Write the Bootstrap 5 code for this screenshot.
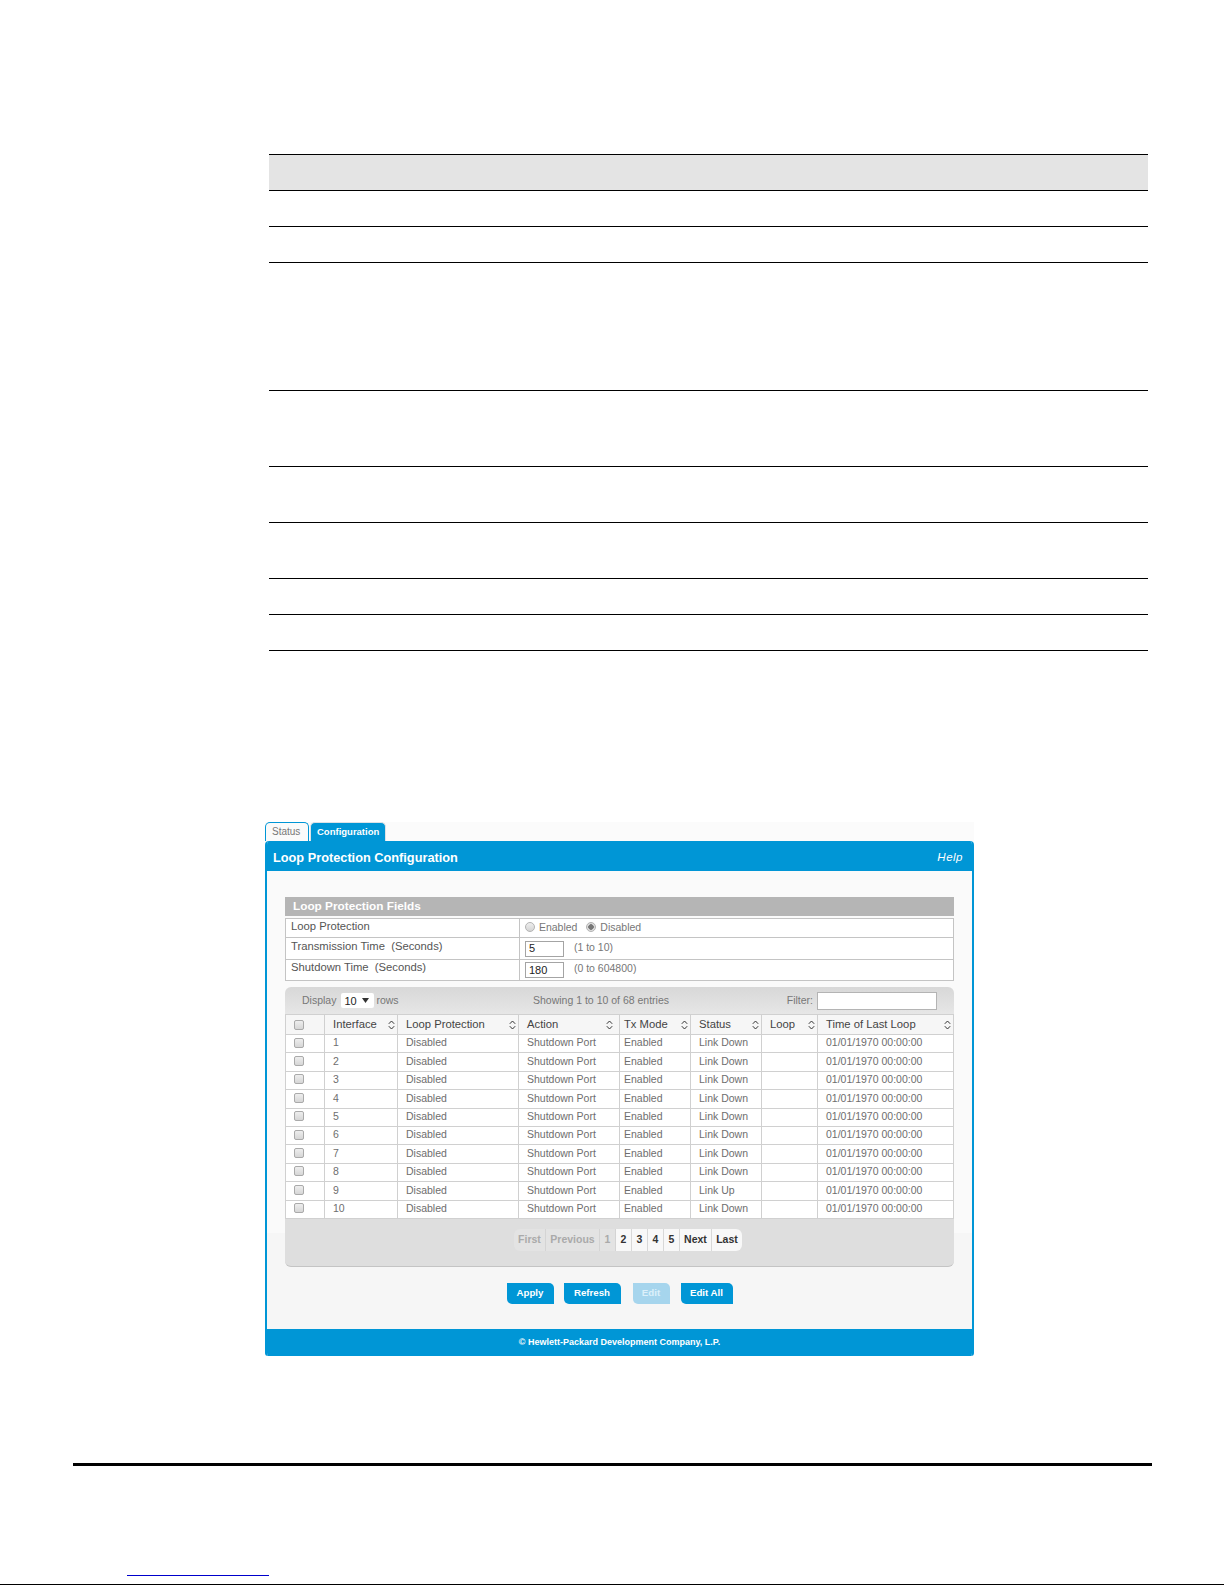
<!DOCTYPE html>
<html lang="en">
<head>
  <meta charset="UTF-8">
  <title>Loop Protection Configuration</title>
  <link href="https://cdn.jsdelivr.net/npm/bootstrap@5.3.3/dist/css/bootstrap.min.css" rel="stylesheet">
  <style>
    html, body { height: 1585px; overflow: hidden; }
    body { background: #fff; font-family: "Liberation Sans", Arial, sans-serif; font-size: 10.5px; color: #666; }

    /* blank document table above the figure */
    .doc-area { padding: 154px 77px 0 269px; }
    .doc-row { border-top: 1px solid #000; height: 36px; }
    .doc-row.head { background: #e4e4e4; }
    .doc-row.h128 { height: 128px; }
    .doc-row.h76 { height: 76px; }
    .doc-row.h56 { height: 56px; }
    .doc-row.end { height: 1px; }

    /* figure */
    .shot { width: 709px; margin: 171px 0 0 265px; background: #fbfbfb; }
    .shot-tabs { height: 19px; border: 0; gap: 1px; }
    .shot-tabs .nav-link { width: 44px; height: 19px; padding: 3px 0 0 6px; border: 1px solid #0096d6; border-bottom: 0; border-radius: 5px 5px 0 0; font-size: 10px; line-height: 12px; color: #777; background: #fafafa; }
    .shot-tabs .nav-link.active { width: 76px; background: #0096d6; color: #fff; font-weight: 700; font-size: 9.5px; }
    .shot-panel { border: solid #0096d6; border-width: 0 2px 0 2px; background: linear-gradient(#fafafa 392px, #f6f6f6 392px); border-radius: 4px 4px 3px 3px; overflow: hidden; }
    .shot-head { height: 30px; margin: 0 -2px; padding: 3px 11px 0 8px; background: #0096d6; color: #fff; }
    .shot-title { font-size: 12.75px; font-weight: 700; }
    .shot-help { font-size: 11.5px; font-style: italic; letter-spacing: .5px; color: #fff; text-decoration: none; }
    .shot-body { padding: 26px 18px 0; }
    .fields-bar { height: 19px; padding: 0 8px; background: #b5b5b5; color: #fff; font-size: 11.8px; font-weight: 700; line-height: 19px; margin-bottom: 2px; }
    .fields-table { width: 669px; margin: 0; table-layout: fixed; border-collapse: collapse; --bs-table-bg: #fff; }
    .fields-table td { padding: 0 0 4px 5px; border: 1px solid #c4c4c4; font-size: 11.25px; line-height: 1; color: #555; vertical-align: middle; }
    .fields-table tr.r1 td { height: 19px; padding-bottom: 2px; }
    .fields-table tr.r2 td { height: 22px; }
    .fields-table tr.r3 td { height: 21px; }
    .fields-table td.val { color: #777; font-size: 10.5px; padding-bottom: 0; }
    .fields-table tr.r1 td.val { padding-bottom: 2px; }
    .fields-table .form-check-input { float: none; width: 10px; height: 10px; margin: 0 1px 0 0; vertical-align: -1px; border: 1px solid #b4b4b4; background: linear-gradient(#eee, #d4d4d4); }
    .fields-table .form-check-input:checked { background: radial-gradient(circle, #777 0 2.5px, #ddd 3px); border-color: #b4b4b4; }
    .fields-table label { margin-right: 6px; }
    .field-line { gap: 7px; }
    .num-box { width: 39px; height: 16px; padding: 0 2px 0 3px; border: 1px solid #a4a4a4; border-radius: 0; font-size: 11px; color: #222; }
    .range-note { margin-top: -3px; }

    .tbl-tools { height: 27px; margin-top: 6px; padding: 0 17px; border-radius: 6px 6px 0 0; background: linear-gradient(#d8d8d8, #e6e6e6); font-size: 10.5px; color: #777; }
    .tbl-left { width: 231px; gap: 4px; }
    .rows-pick { width: 33px; height: 15px; margin: 0 -2px 0 1px; padding: 0 0 0 3px; font-size: 11px; color: #222; border: 0; border-radius: 2px; background-color: #fff; background-position: right 5px center; background-size: 7px 5px; background-image: url("data:image/svg+xml,%3Csvg xmlns='http://www.w3.org/2000/svg' viewBox='0 0 7 5'%3E%3Cpath d='M0 0h7L3.5 5z' fill='%23333'/%3E%3C/svg%3E"); }
    .filter-box { width: 120px; height: 18px; padding: 0 3px; margin-left: 4px; border: 1px solid #b4b4b4; border-radius: 0; }

    .port-table { width: 669px; margin: 0; table-layout: fixed; border-collapse: collapse; --bs-table-bg: #fff; }
    .port-table th, .port-table td { padding: 0 8px; border: 1px solid #d0d0d0; vertical-align: middle; white-space: nowrap; }
    .port-table th { height: 20px; padding-right: 2px; font-size: 11.25px; font-weight: 400; color: #444; background: #f6f6f6; }
    .port-table td { height: 18.4px; padding-bottom: 2px; font-size: 10.5px; color: #6e6e6e; line-height: 1; }
    .port-table th:nth-child(4) { padding-right: 6px; }
    .port-table th:nth-child(5), .port-table td:nth-child(5) { padding-left: 4px; }
    .port-table .form-check-input { float: none; display: block; width: 10px; height: 10px; margin: 0; border: 1px solid #aaa; border-radius: 2px; background: linear-gradient(#eee, #d6d6d6); }
    .sort-ico { width: 7px; height: 10px; fill: none; stroke: #333; stroke-width: 1; }
    .cw-234 { width: 234px; }
    .cw-39 { width: 39px; } .cw-73 { width: 73px; } .cw-121 { width: 121px; } .cw-101 { width: 101px; }
    .cw-71 { width: 71px; } .cw-56 { width: 56px; }

    .tbl-foot { height: 48px; padding: 10px 0 0 17px; border-bottom: 1px solid #c4c4c4; border-radius: 0 0 6px 6px; background: #dedede; }
    .tbl-foot .pagination { margin: 0; --bs-pagination-border-radius: 6px; }
    .tbl-foot .pagination .page-item .page-link { height: 22px; margin: 0; padding: 0; line-height: 20px; text-align: center; font-size: 10.5px; font-weight: 700; color: #333; background: #f8f8f8; border: 0; border-right: 1px solid #d8d8d8; }
    .tbl-foot .pagination .page-item:last-child .page-link { border-right: 0; }
    .tbl-foot .pagination .page-item.disabled .page-link { color: #aaa; background: #e3e3e3; border-right-color: #d4d4d4; }
    .pg-first { width: 32px; } .pg-prev { width: 54px; } .pg-num { width: 16px; } .pg-next { width: 32px; } .pg-last { width: 30px; }

    .shot-actions { height: 62px; padding-top: 16px; gap: 10px; }
    .shot-actions .btn { height: 21px; padding: 0; border: 0; border-radius: 0 5px 0 5px; background: #0096d6; color: #fff; font-size: 9.7px; font-weight: 700; line-height: 20px; opacity: 1; }
    .shot-actions .btn:disabled { margin: 0 1px 0 2px; background: #a6d5ed; color: #dcf0fa; }
    .btn-w47 { width: 47px; } .btn-w57 { width: 57px; } .btn-w37 { width: 37px; } .btn-w52 { width: 52px; }

    .shot-foot { height: 27px; margin: 0 -2px; background: #0096d6; color: #fff; font-size: 9px; font-weight: 700; }

    /* page bottom */
    .page-rule { width: 1079px; height: 3px; margin: 107px 0 0 73px; background: #000; }
    .page-link-line { display: block; width: 142px; height: 1px; margin: 109px 0 0 127px; background: #0000cc; }
    .page-end { height: 1px; margin-top: 8px; margin-right: 1px; background: #000; }
  </style>
</head>
<body>

<!-- Empty document table -->
<div class="doc-area">
  <div class="doc-row head"></div>
  <div class="doc-row"></div>
  <div class="doc-row"></div>
  <div class="doc-row h128"></div>
  <div class="doc-row h76"></div>
  <div class="doc-row h56"></div>
  <div class="doc-row h56"></div>
  <div class="doc-row"></div>
  <div class="doc-row"></div>
  <div class="doc-row end"></div>
</div>

<!-- Screenshot figure -->
<div class="shot">
  <ul class="nav nav-tabs shot-tabs">
    <li class="nav-item"><a class="nav-link" href="#">Status</a></li>
    <li class="nav-item"><a class="nav-link active" href="#">Configuration</a></li>
  </ul>

  <div class="shot-panel">
    <div class="shot-head d-flex align-items-center justify-content-between">
      <span class="shot-title">Loop Protection Configuration</span>
      <a class="shot-help" href="#">Help</a>
    </div>

    <div class="shot-body">
      <div class="fields-bar">Loop Protection Fields</div>
      <table class="table fields-table">
        <colgroup><col class="cw-234"><col></colgroup>
        <tr class="r1">
          <td>Loop Protection</td>
          <td class="val">
            <label><input class="form-check-input" type="radio" name="lp"> Enabled</label>
            <label><input class="form-check-input" type="radio" name="lp" checked> Disabled</label>
          </td>
        </tr>
        <tr class="r2">
          <td>Transmission Time &nbsp;(Seconds)</td>
          <td class="val">
            <div class="d-flex align-items-center field-line">
              <input class="form-control num-box" value="5"><span class="range-note">&nbsp;(1 to 10)</span>
            </div>
          </td>
        </tr>
        <tr class="r3">
          <td>Shutdown Time &nbsp;(Seconds)</td>
          <td class="val">
            <div class="d-flex align-items-center field-line">
              <input class="form-control num-box" value="180"><span class="range-note">&nbsp;(0 to 604800)</span>
            </div>
          </td>
        </tr>
      </table>

      <div class="tbl-tools d-flex align-items-center">
        <div class="tbl-left d-flex align-items-center">
          <span>Display</span>
          <select class="form-select rows-pick"><option>10</option></select>
          <span>rows</span>
        </div>
        <span>Showing 1 to 10 of 68 entries</span>
        <div class="ms-auto d-flex align-items-center">
          <span>Filter:</span>
          <input class="form-control filter-box">
        </div>
      </div>

      <table class="table port-table">
        <colgroup>
          <col class="cw-39"><col class="cw-73"><col class="cw-121"><col class="cw-101"><col class="cw-71"><col class="cw-71"><col class="cw-56"><col>
        </colgroup>
        <thead><tr id="portHead"></tr></thead>
        <tbody id="portRows"></tbody>
      </table>

      <div class="tbl-foot d-flex justify-content-center">
        <ul class="pagination">
          <li class="page-item disabled"><a class="page-link pg-first" href="#">First</a></li>
          <li class="page-item disabled"><a class="page-link pg-prev" href="#">Previous</a></li>
          <li class="page-item disabled"><a class="page-link pg-num" href="#">1</a></li>
          <li class="page-item"><a class="page-link pg-num" href="#">2</a></li>
          <li class="page-item"><a class="page-link pg-num" href="#">3</a></li>
          <li class="page-item"><a class="page-link pg-num" href="#">4</a></li>
          <li class="page-item"><a class="page-link pg-num" href="#">5</a></li>
          <li class="page-item"><a class="page-link pg-next" href="#">Next</a></li>
          <li class="page-item"><a class="page-link pg-last" href="#">Last</a></li>
        </ul>
      </div>
    </div>

    <div class="shot-actions d-flex justify-content-center">
      <button class="btn btn-w47">Apply</button>
      <button class="btn btn-w57">Refresh</button>
      <button class="btn btn-w37" disabled>Edit</button>
      <button class="btn btn-w52">Edit All</button>
    </div>

    <div class="shot-foot d-flex align-items-center justify-content-center">© Hewlett-Packard Development Company, L.P.</div>
  </div>
</div>

<div class="page-rule"></div>
<a class="page-link-line" href="#" aria-label="link"></a>
<div class="page-end"></div>

<script>
  // Build the port table
  const sortIcon = '<svg class="sort-ico ms-auto" viewBox="0 0 7 10"><path d="M.8 3.8 3.5 1l2.7 2.8M.8 6.2 3.5 9l2.7-2.8"/></svg>';
  const heads = ["Interface", "Loop Protection", "Action", "Tx Mode", "Status", "Loop", "Time of Last Loop"];

  let headHtml = '<th><input class="form-check-input" type="checkbox"></th>';
  heads.forEach(h => {
    headHtml += '<th><div class="d-flex align-items-center">' + h + sortIcon + '</div></th>';
  });
  document.getElementById("portHead").innerHTML = headHtml;

  let rowsHtml = "";
  for (let i = 1; i <= 10; i++) {
    const status = i === 9 ? "Link Up" : "Link Down";
    rowsHtml += '<tr><td><input class="form-check-input" type="checkbox"></td>'
      + '<td>' + i + '</td><td>Disabled</td><td>Shutdown Port</td><td>Enabled</td>'
      + '<td>' + status + '</td><td></td><td>01/01/1970 00:00:00</td></tr>';
  }
  document.getElementById("portRows").innerHTML = rowsHtml;
</script>

<script src="https://cdn.jsdelivr.net/npm/bootstrap@5.3.3/dist/js/bootstrap.bundle.min.js"></script>
</body>
</html>
